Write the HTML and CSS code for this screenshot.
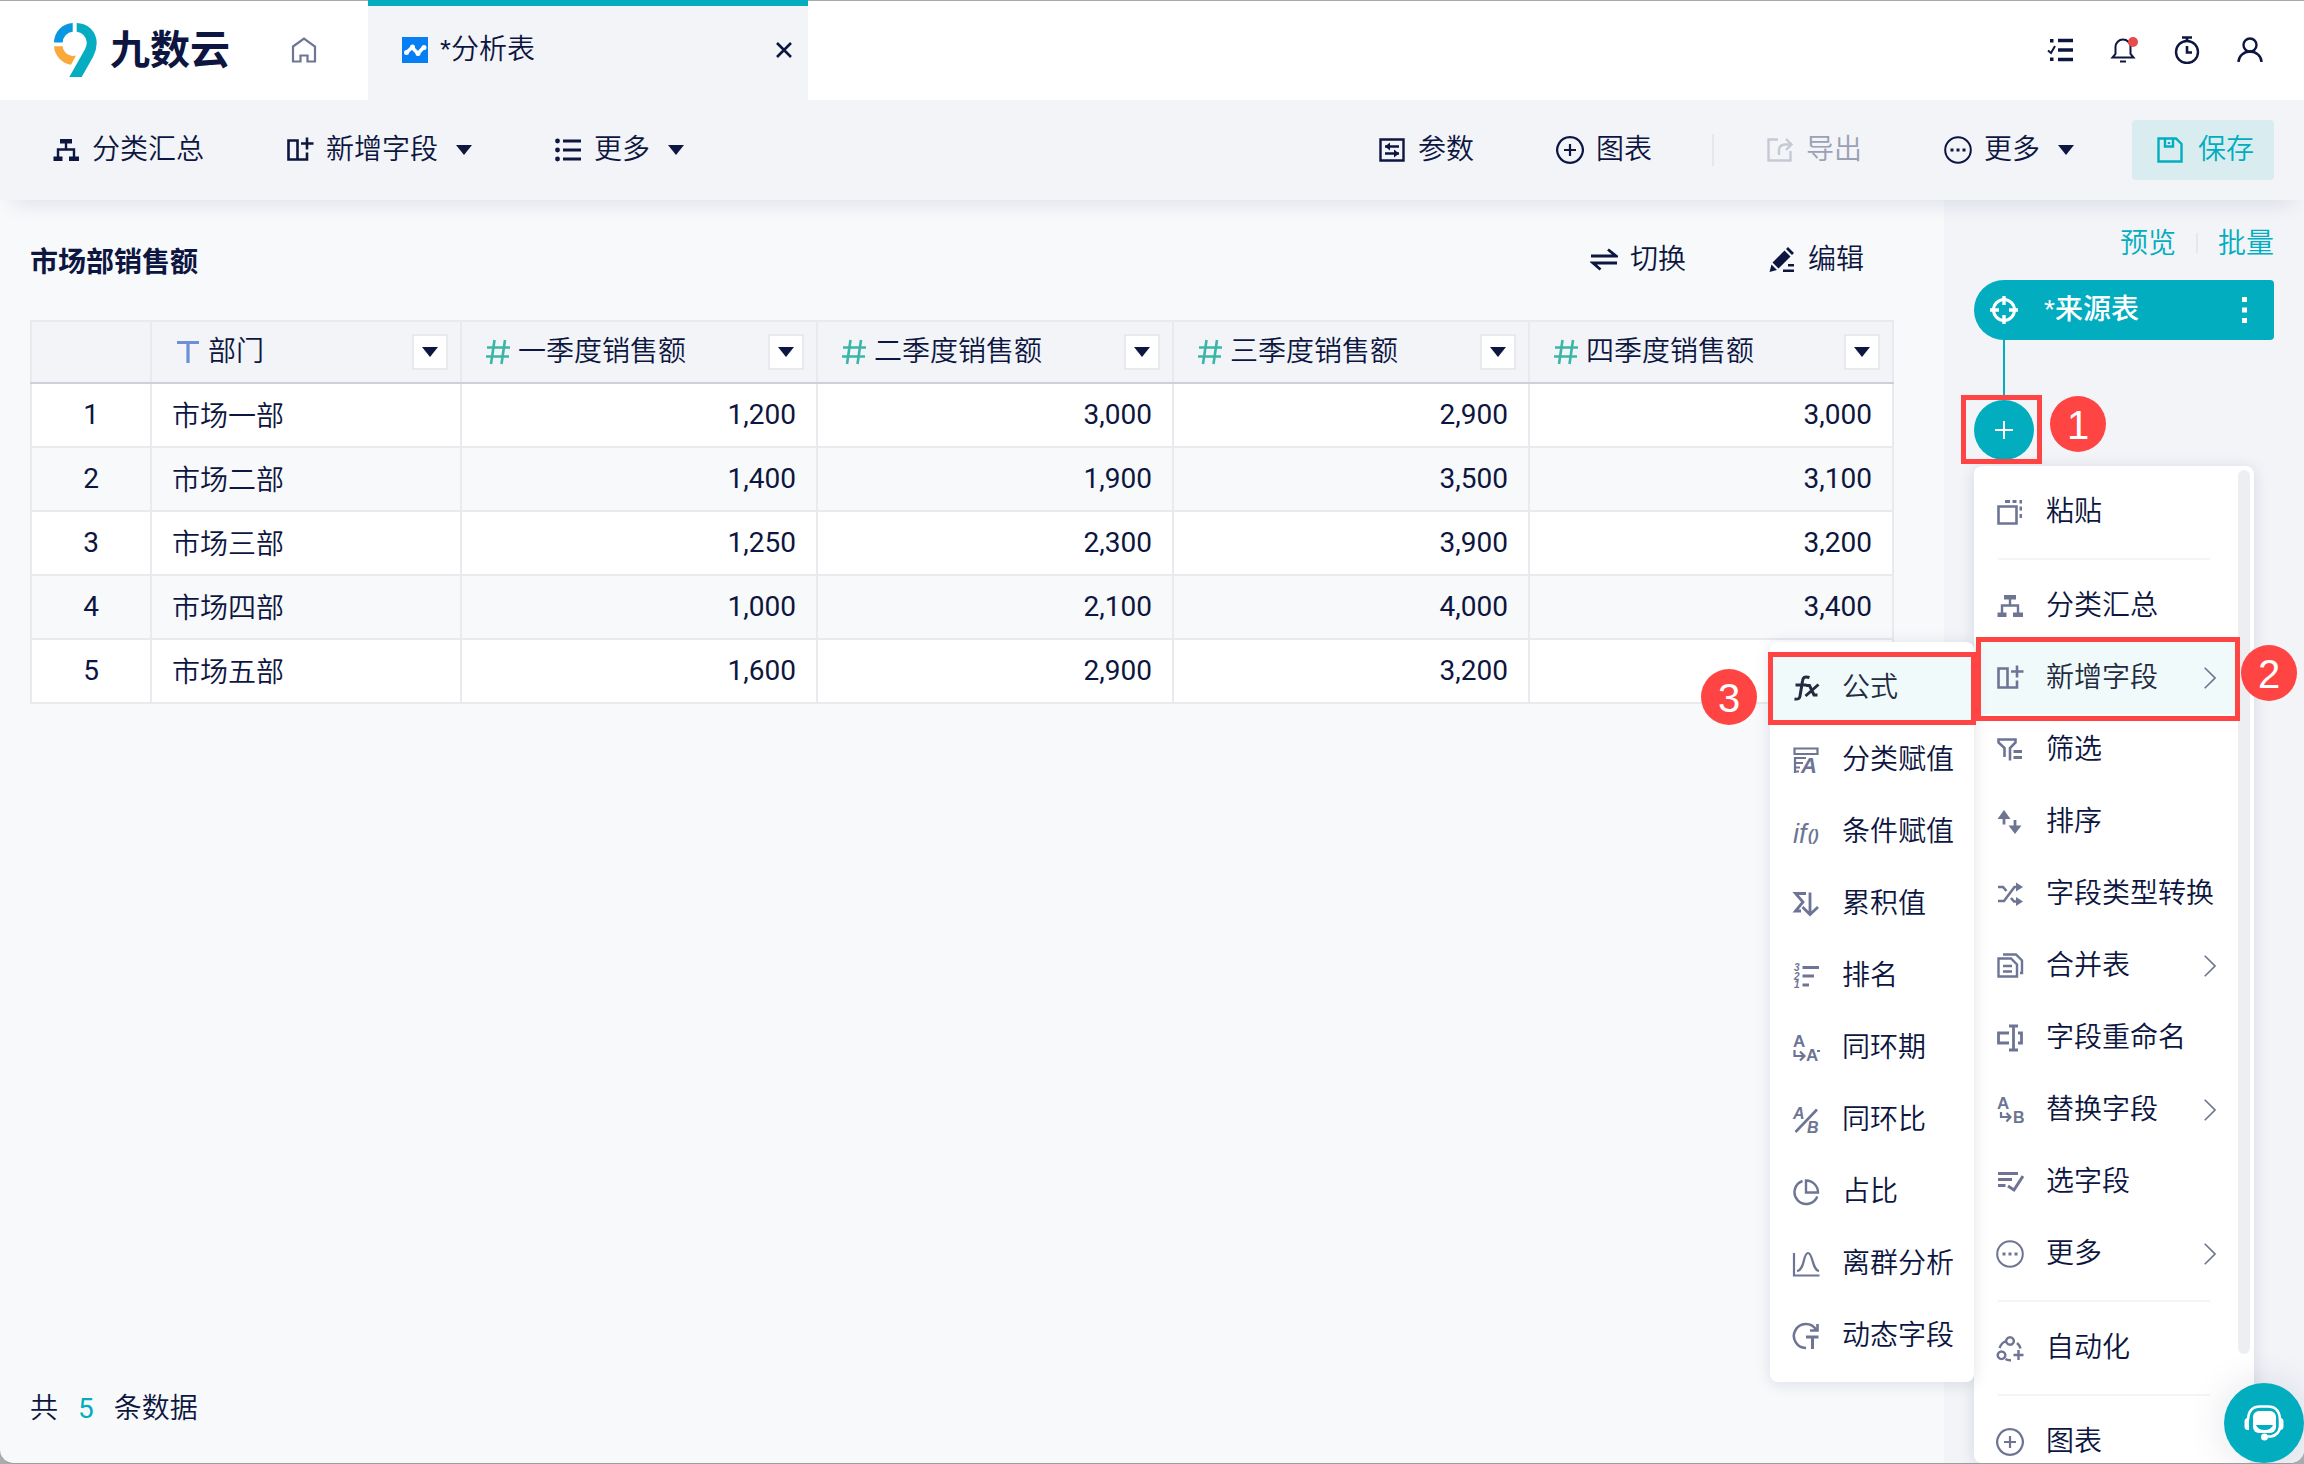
FILE: index.html
```html
<!DOCTYPE html>
<html lang="zh-CN">
<head>
<meta charset="utf-8">
<meta name="viewport" content="width=device-width, initial-scale=1">
<title>九数云 - 分析表</title>
<link rel="stylesheet" href="styles.css">
</head>
<body>
<svg class="sprite" aria-hidden="true">
  <symbol id="i-home" viewBox="0 0 28 28"><path d="M3 10.500 14 2.500l11 8V25.500h-7.500v-6h-7v6H3z" fill="none" stroke="currentColor" stroke-width="2.200"/></symbol>
  <symbol id="i-tree" viewBox="0 0 28 28"><path d="M8 3h12v4.500H8zM1.500 20.500h9V25h-9zM17 20.500h10V25H17z"/><path d="M14 7v6M6 21v-7.500h16V21" fill="none" stroke="currentColor" stroke-width="2.400"/></symbol>
  <symbol id="i-addcol" viewBox="0 0 28 28"><path d="M2.500 4.500h9v19h-9zM11.500 23.500H21V16.500M21 1.500v12M15 7.500h12.500" fill="none" stroke="currentColor" stroke-width="2.600"/></symbol>
  <symbol id="i-list" viewBox="0 0 28 28"><circle cx="3.500" cy="5" r="2.400"/><circle cx="3.500" cy="14" r="2.400"/><circle cx="3.500" cy="23" r="2.400"/><path d="M9 5h18M9 14h18M9 23h18" stroke="currentColor" stroke-width="2.800"/></symbol>
  <symbol id="i-param" viewBox="0 0 28 28"><path d="M2.500 3.500h23v21h-23zM7 10.500h14M7 17.500h14" fill="none" stroke="currentColor" stroke-width="2.400"/><path d="M12 6.500v8l-5-4zM16 13.500v8l5-4z"/></symbol>
  <symbol id="i-plus-circle" viewBox="0 0 28 28"><path d="M14 1.200a12.800 12.800 0 1 0 .01 0zM14 8v12M8 14h12" fill="none" stroke="currentColor" stroke-width="2.200"/></symbol>
  <symbol id="i-export" viewBox="0 0 28 28"><path d="M12 3.500H2.500v21h22V15M13 19v-5q0-5 6-5.500h6M20 3l5.500 5.500L20 14" fill="none" stroke="currentColor" stroke-width="2.400"/></symbol>
  <symbol id="i-more" viewBox="0 0 28 28"><circle cx="14" cy="14" r="12.800" fill="none" stroke="currentColor" stroke-width="2"/><path d="M6.500 12.500h3v3h-3zM12.500 12.500h3v3h-3zM18.500 12.500h3v3h-3z"/></symbol>
  <symbol id="i-save" viewBox="0 0 28 28"><path d="M2.500 2.500H20l5.500 5.500v17.500h-23zM9 3v7.500h8V3M13 6v2" fill="none" stroke="currentColor" stroke-width="2.400"/></symbol>
  <symbol id="i-tasks" viewBox="0 0 28 28"><path d="M11 4.500h15M11 14h15M11 23.500h15" stroke="currentColor" stroke-width="3.400"/><path d="M3 3h3.500v3.500H3zM3 21.500h3.500V25H3z"/><path d="m1 14.500 3 2.500 4-7" fill="none" stroke="currentColor" stroke-width="2"/></symbol>
  <symbol id="i-bell" viewBox="0 0 28 28"><path d="M2.500 21.500h21L20.500 18V11a7.500 7.500 0 0 0-15 0v7zM10 25.500h6" fill="none" stroke="currentColor" stroke-width="2"/><circle cx="23" cy="6" r="5" fill="#e94b4b"/></symbol>
  <symbol id="i-timer" viewBox="0 0 28 28"><circle cx="14" cy="16" r="11" fill="none" stroke="currentColor" stroke-width="2.400"/><path d="M9 1.500h10M14 2v4M14 10v6.500h5" fill="none" stroke="currentColor" stroke-width="2.600"/></symbol>
  <symbol id="i-user" viewBox="0 0 28 28"><circle cx="14" cy="9" r="6.500" fill="none" stroke="currentColor" stroke-width="2.400"/><path d="M2.500 26a11.500 10.500 0 0 1 23 0" fill="none" stroke="currentColor" stroke-width="2.400"/></symbol>
  <symbol id="i-swap" viewBox="0 0 28 28"><path d="M1 10h25L18 3.500M27 17H3l7.500 6.500" fill="none" stroke="currentColor" stroke-width="2.800"/></symbol>
  <symbol id="i-edit" viewBox="0 0 28 28"><path d="m4.500 16.500 12-12 6 6-12 12zM18 3l2-2 6 6-2 2zM1.500 26l2-7.500 5.500 5.500zM20 18h6v2.500h-6zM15 23.500h11V26H15z"/></symbol>
  <symbol id="i-type-text" viewBox="0 0 28 28"><path d="M3 4.500h22M14 4.500V25" fill="none" stroke="currentColor" stroke-width="3.200"/></symbol>
  <symbol id="i-type-num" viewBox="0 0 28 28"><path d="M10.500 2 7 26M21 2l-3.500 24M3 9.500h23M2 18.500h23" fill="none" stroke="currentColor" stroke-width="2.600"/></symbol>
  <symbol id="i-target" viewBox="0 0 28 28"><circle cx="14" cy="14" r="10.500" fill="none" stroke="currentColor" stroke-width="3"/><path d="M14 0v9M14 19v9M0 14h9M19 14h9" stroke="currentColor" stroke-width="3.400"/></symbol>
  <symbol id="i-paste" viewBox="0 0 28 28"><path d="M2.500 8.500h18v17h-18z" fill="none" stroke="currentColor" stroke-width="2.600"/><path d="M9 2h5v3H9zM16.500 2h4v3h-4zM23.500 2H26v3.500h-2.500zM23.500 8.500H26v4h-2.500zM23.500 16H26v4h-2.500z"/></symbol>
  <symbol id="i-filter" viewBox="0 0 28 28"><path d="M8.500 21v-9L2.500 6.500V3.500h17v3L14 12v12.500" fill="none" stroke="currentColor" stroke-width="2.600"/><path d="M17.500 15.500H26M17.500 21.500H26" stroke="currentColor" stroke-width="2.800"/></symbol>
  <symbol id="i-sort" viewBox="0 0 28 28"><path d="m8 2 6.500 9h-13zM19 26l6.500-8.500h-13z"/><path d="M8 10v6.500M19 12v6.500" stroke="currentColor" stroke-width="2.800"/></symbol>
  <symbol id="i-shuffle" viewBox="0 0 28 28"><path d="M2 7h5l3.500 4M2 21h6L18.500 7H24M15 18l3 3.500h6" fill="none" stroke="currentColor" stroke-width="2.600"/><path d="m20 2.500 7 4.500-7 4.500zM20 17l7 4.500-7 4.500z"/></symbol>
  <symbol id="i-merge" viewBox="0 0 28 28"><path d="M2.500 6.500h12.500l6 6v12h-18.500zM7 2.500h13l6 6v12.500h-2M7 14h9M7 19.500h9" fill="none" stroke="currentColor" stroke-width="2.400"/></symbol>
  <symbol id="i-rename" viewBox="0 0 28 28"><path d="M13 9H2.500v10H13M22 9h3.500v10H22M13 2h9M13 26h9M17.500 2v24" fill="none" stroke="currentColor" stroke-width="2.800"/></symbol>
  <symbol id="i-replace" viewBox="0 0 28 28"><text x="1" y="13" font-size="17" font-weight="700">A</text><text x="17" y="27" font-size="16" font-weight="700">B</text><path d="M5 16v5h9M10.500 17l4 4-4 4.500" fill="none" stroke="currentColor" stroke-width="2.200"/></symbol>
  <symbol id="i-select" viewBox="0 0 28 28"><path d="M2 5.500h20M2 11.500h14M2 17.500h7.500M12 18l6 4 9-14" fill="none" stroke="currentColor" stroke-width="3"/></symbol>
  <symbol id="i-auto" viewBox="0 0 28 28"><path d="M14 3.200a3.800 3.800 0 1 0 .01 0zM5.500 17.500a3.800 3.800 0 1 0 .01 0zM3.500 14a12 12 0 0 1 6.500-7M21 9q3 2.500 3.500 5.500M9.500 25q2 1.500 5.500 1.200M22.500 16v10M17.500 21h10" fill="none" stroke="currentColor" stroke-width="2.400"/></symbol>
  <symbol id="i-fx" viewBox="0 0 28 28"><path d="M17.500 3.500c-5-1.500-6.500 0-7 3.500L8 22c-.5 3-2 3.500-5.500 3M3.500 11h11M14 11.500h3.500l4.500 9.500h3.500M26.500 10.500 13.500 22" fill="none" stroke="currentColor" stroke-width="3"/></symbol>
  <symbol id="i-assign" viewBox="0 0 28 28"><path d="M2.500 2.500h23v5.500h-23zM2 12h12M2 17h9M2 21.500h6M3 11v16M2 25.500h5" fill="none" stroke="currentColor" stroke-width="2.200"/><text x="9" y="27" font-size="22" font-style="italic" font-weight="700">A</text></symbol>
  <symbol id="i-if" viewBox="0 0 28 28"><text x="1" y="25" font-size="27" font-style="italic" font-weight="400">if</text><text x="16" y="23" font-size="16" font-style="italic" font-weight="700">()</text></symbol>
  <symbol id="i-sum" viewBox="0 0 28 28"><path d="M14 3.500H3.500L11 12 3.500 21H9M18 2.500v22M10.500 17l7.500 7.500 8-7.500" fill="none" stroke="currentColor" stroke-width="2.800"/></symbol>
  <symbol id="i-rank" viewBox="0 0 28 28"><text x="2" y="9" font-size="10" font-style="italic" font-weight="700">3</text><text x="2" y="17.500" font-size="10" font-style="italic" font-weight="700">2</text><text x="2" y="26" font-size="10" font-style="italic" font-weight="700">1</text><path d="M10.500 5.500H27M10.500 14H22M10.500 23H17" stroke="currentColor" stroke-width="2.800"/></symbol>
  <symbol id="i-period" viewBox="0 0 28 28"><text x="1" y="13" font-size="17" font-weight="700">A</text><text x="14" y="27" font-size="17" font-weight="700">A</text><path d="M2.500 16v6h9M8 17.500l4.500 4.500L8 26.500M25 17h4" fill="none" stroke="currentColor" stroke-width="2.200"/></symbol>
  <symbol id="i-ratio" viewBox="0 0 28 28"><text x="1" y="13" font-size="16" font-style="italic" font-weight="700">A</text><text x="15" y="26.500" font-size="16" font-style="italic" font-weight="700">B</text><path d="M3.500 26 25 3.500" stroke="currentColor" stroke-width="2.600"/></symbol>
  <symbol id="i-pie" viewBox="0 0 28 28"><path d="M10.500 3A11.800 11.800 0 1 0 25.300 18.500M14 2.500v12h12A12 12 0 0 0 14 2.500z" fill="none" stroke="currentColor" stroke-width="2.400"/></symbol>
  <symbol id="i-curve" viewBox="0 0 28 28"><path d="M2 3v22.500h25.500M5 21c8-1 6-18 11-18s4 17 11 18" fill="none" stroke="currentColor" stroke-width="2.200"/></symbol>
  <symbol id="i-dynamic" viewBox="0 0 28 28"><path d="M14 26A12 12 0 1 1 24 7.500M25.500 2v6.500H18" fill="none" stroke="currentColor" stroke-width="2.600"/><path d="M14 15h12.500M20.500 15v12" stroke="currentColor" stroke-width="3"/></symbol>
  <symbol id="i-caret" viewBox="0 0 16 10"><path d="M0 0h16L8 10z"/></symbol>
  <symbol id="i-chevron" viewBox="0 0 12 22"><path d="M.7.7 11 11 .7 21.300" fill="none" stroke="currentColor" stroke-width="1.600"/></symbol>
</svg>

<div class="window">
  <header class="topbar">
    <a class="logo" href="#">
      <svg class="logo-mark" viewBox="0 0 46 58" aria-hidden="true">
        <path fill="#0a97e2" d="M2 21.500A19.500 19.500 0 0 1 20.700 2v8.700A11 11 0 0 0 10.700 21.500z"/>
        <path fill="#fba93b" d="M2 25.300h8.700A10.500 10.500 0 0 0 24 34.500l-5 9.200A20 20 0 0 1 2 25.300z"/>
        <path fill="#06adc0" d="M24.700 2A20 20 0 0 1 44.700 22Q44.700 29 41 36L29.700 56H17.300L32 30Q35 25 34.700 21A11.500 11.500 0 0 0 24.700 10.700z"/>
      </svg>
      <span class="logo-name">九数云</span>
    </a>
    <a class="home" href="#" aria-label="首页"><svg class="icon"><use href="#i-home"/></svg></a>
    <div class="tab">
      <svg class="tab-icon" viewBox="0 0 26 26" aria-hidden="true"><path fill="#067ff5" d="M0 0h26v26H0z"/><path d="m4 16 6-5.500 6 6L22 10" fill="none" stroke="#fff" stroke-width="3.500"/><g fill="#fff"><circle cx="4.500" cy="15.500" r="2.500"/><circle cx="10.500" cy="10" r="2.500"/><circle cx="16" cy="16.500" r="2.500"/><circle cx="22" cy="10.500" r="2.500"/></g></svg>
      <span class="tab-title">*分析表</span>
      <button class="tab-close" type="button" aria-label="关闭"><svg viewBox="0 0 16 16"><path d="m1 1 14 14M15 1 1 15" stroke="currentColor" stroke-width="2.600"/></svg></button>
    </div>
    <nav class="account">
      <a href="#" aria-label="任务"><svg class="icon"><use href="#i-tasks"/></svg></a>
      <a href="#" aria-label="通知"><svg class="icon"><use href="#i-bell"/></svg></a>
      <a href="#" aria-label="定时"><svg class="icon"><use href="#i-timer"/></svg></a>
      <a href="#" aria-label="用户"><svg class="icon"><use href="#i-user"/></svg></a>
    </nav>
  </header>

  <div class="toolbar">
    <div class="tools">
      <button class="tool" type="button"><svg class="icon"><use href="#i-tree"/></svg>分类汇总</button>
      <button class="tool" type="button"><svg class="icon"><use href="#i-addcol"/></svg>新增字段<svg class="caret"><use href="#i-caret"/></svg></button>
      <button class="tool" type="button"><svg class="icon"><use href="#i-list"/></svg>更多<svg class="caret"><use href="#i-caret"/></svg></button>
    </div>
    <div class="tools tools-end">
      <button class="tool" type="button"><svg class="icon"><use href="#i-param"/></svg>参数</button>
      <button class="tool" type="button"><svg class="icon"><use href="#i-plus-circle"/></svg>图表</button>
    </div>
    <span class="tool-divider"></span>
    <div class="tools">
      <button class="tool" type="button" disabled><svg class="icon"><use href="#i-export"/></svg>导出</button>
      <button class="tool" type="button"><svg class="icon"><use href="#i-more"/></svg>更多<svg class="caret"><use href="#i-caret"/></svg></button>
    </div>
    <button class="save" type="button"><svg class="icon"><use href="#i-save"/></svg>保存</button>
  </div>

  <div class="workspace">
    <main class="content">
      <div class="heading">
        <h1>市场部销售额</h1>
        <button class="tool" type="button"><svg class="icon"><use href="#i-swap"/></svg>切换</button>
        <button class="tool" type="button"><svg class="icon"><use href="#i-edit"/></svg>编辑</button>
      </div>
      <table class="data">
        <colgroup><col class="c-index"><col class="c-dept"><col class="c-num"><col class="c-num"><col class="c-num"><col></colgroup>
        <thead>
          <tr>
            <th></th>
            <th scope="col"><div class="field"><svg class="icon text"><use href="#i-type-text"/></svg>部门<button type="button" aria-label="部门"><svg class="caret"><use href="#i-caret"/></svg></button></div></th>
            <th scope="col"><div class="field"><svg class="icon num"><use href="#i-type-num"/></svg>一季度销售额<button type="button" aria-label="一季度"><svg class="caret"><use href="#i-caret"/></svg></button></div></th>
            <th scope="col"><div class="field"><svg class="icon num"><use href="#i-type-num"/></svg>二季度销售额<button type="button" aria-label="二季度"><svg class="caret"><use href="#i-caret"/></svg></button></div></th>
            <th scope="col"><div class="field"><svg class="icon num"><use href="#i-type-num"/></svg>三季度销售额<button type="button" aria-label="三季度"><svg class="caret"><use href="#i-caret"/></svg></button></div></th>
            <th scope="col"><div class="field"><svg class="icon num"><use href="#i-type-num"/></svg>四季度销售额<button type="button" aria-label="四季度"><svg class="caret"><use href="#i-caret"/></svg></button></div></th>
          </tr>
        </thead>
        <tbody>
          <tr><td>1</td><td>市场一部</td><td>1,200</td><td>3,000</td><td>2,900</td><td>3,000</td></tr>
          <tr><td>2</td><td>市场二部</td><td>1,400</td><td>1,900</td><td>3,500</td><td>3,100</td></tr>
          <tr><td>3</td><td>市场三部</td><td>1,250</td><td>2,300</td><td>3,900</td><td>3,200</td></tr>
          <tr><td>4</td><td>市场四部</td><td>1,000</td><td>2,100</td><td>4,000</td><td>3,400</td></tr>
          <tr><td>5</td><td>市场五部</td><td>1,600</td><td>2,900</td><td>3,200</td><td></td></tr>
        </tbody>
      </table>
      <footer class="count"><span>共</span><span class="total">5</span><span>条数据</span></footer>
    </main>

    <aside class="steps">
      <nav class="step-links"><a href="#">预览</a><a href="#">批量</a></nav>
      <div class="node">
        <svg class="icon"><use href="#i-target"/></svg>
        <span class="node-name">*来源表</span>
        <button type="button" aria-label="操作"><svg viewBox="0 0 6 26"><path d="M0 0h5v5H0zM0 10.500h5v5H0zM0 21h5v5H0z"/></svg></button>
      </div>
      <span class="link-line"></span>
      <button class="add" type="button" aria-label="添加步骤"><svg viewBox="0 0 20 20"><path d="M10 1v18M1 10h18" stroke="currentColor" stroke-width="2"/></svg></button>

      <div class="menu step-menu">
        <button class="item" type="button"><svg class="icon"><use href="#i-paste"/></svg>粘贴</button>
        <hr>
        <button class="item" type="button"><svg class="icon"><use href="#i-tree"/></svg>分类汇总</button>
        <button class="item active" type="button"><svg class="icon"><use href="#i-addcol"/></svg>新增字段<svg class="chevron"><use href="#i-chevron"/></svg></button>
        <button class="item" type="button"><svg class="icon"><use href="#i-filter"/></svg>筛选</button>
        <button class="item" type="button"><svg class="icon"><use href="#i-sort"/></svg>排序</button>
        <button class="item" type="button"><svg class="icon"><use href="#i-shuffle"/></svg>字段类型转换</button>
        <button class="item" type="button"><svg class="icon"><use href="#i-merge"/></svg>合并表<svg class="chevron"><use href="#i-chevron"/></svg></button>
        <button class="item" type="button"><svg class="icon"><use href="#i-rename"/></svg>字段重命名</button>
        <button class="item" type="button"><svg class="icon"><use href="#i-replace"/></svg>替换字段<svg class="chevron"><use href="#i-chevron"/></svg></button>
        <button class="item" type="button"><svg class="icon"><use href="#i-select"/></svg>选字段</button>
        <button class="item" type="button"><svg class="icon"><use href="#i-more"/></svg>更多<svg class="chevron"><use href="#i-chevron"/></svg></button>
        <hr>
        <button class="item" type="button"><svg class="icon"><use href="#i-auto"/></svg>自动化</button>
        <hr>
        <button class="item" type="button"><svg class="icon"><use href="#i-plus-circle"/></svg>图表</button>
        <span class="thumb"></span>
      </div>

      <div class="menu field-menu">
        <button class="item active dark" type="button"><svg class="icon"><use href="#i-fx"/></svg>公式</button>
        <button class="item" type="button"><svg class="icon"><use href="#i-assign"/></svg>分类赋值</button>
        <button class="item" type="button"><svg class="icon"><use href="#i-if"/></svg>条件赋值</button>
        <button class="item" type="button"><svg class="icon"><use href="#i-sum"/></svg>累积值</button>
        <button class="item" type="button"><svg class="icon"><use href="#i-rank"/></svg>排名</button>
        <button class="item" type="button"><svg class="icon"><use href="#i-period"/></svg>同环期</button>
        <button class="item" type="button"><svg class="icon"><use href="#i-ratio"/></svg>同环比</button>
        <button class="item" type="button"><svg class="icon"><use href="#i-pie"/></svg>占比</button>
        <button class="item" type="button"><svg class="icon"><use href="#i-curve"/></svg>离群分析</button>
        <button class="item" type="button"><svg class="icon"><use href="#i-dynamic"/></svg>动态字段</button>
      </div>

      <span class="frame frame-1"></span><span class="badge badge-1">1</span>
      <span class="frame frame-2"></span><span class="badge badge-2">2</span>
      <span class="frame frame-3"></span><span class="badge badge-3">3</span>

      <button class="chat" type="button" aria-label="客服">
        <svg viewBox="0 0 40 36"><rect x="9" y="6" width="23" height="22" rx="6" fill="#fff"/><path d="M12 20h17q-2 5-8.500 5T12 20z" fill="#02adc0"/><path d="M4 15v-1Q5 1.500 16 1.500h8Q35 1.500 36 14v8q-1 8-9 9.500h-6" fill="none" stroke="#fff" stroke-width="2.600"/><path d="M5 13v12H4a3.500 3.500 0 0 1-3.500-3.500v-5A3.500 3.500 0 0 1 4 13zM35 13v12h1a3.500 3.500 0 0 0 3.500-3.500v-5A3.500 3.500 0 0 0 36 13z" fill="#fff"/><circle cx="20.500" cy="32" r="3.500" fill="#fff"/></svg>
      </button>
    </aside>
  </div>
</div>
</body>
</html>
```
FILE: styles.css
```css
* {
  box-sizing: border-box;
}

:root {
  --ink: #0d1640;
  --muted: #6e7594;
  --teal: #02adc0;
  --panel: #f2f4f8;
  --page: #f7f9fb;
  --line: #e8eaee;
  --red: #ff4444;
}

html {
  background: #a9abae;
}

body {
  margin: 0;
  color: var(--ink);
  font: 350 28px/40px "Liberation Sans", "Noto Sans CJK SC", sans-serif;
}

button {
  margin: 0;
  padding: 0;
  border: 0;
  background: none;
  color: inherit;
  font: inherit;
  cursor: pointer;
}

a {
  color: inherit;
  text-decoration: none;
}

svg {
  display: block;
  flex: none;
  fill: currentColor;
}

.sprite {
  display: none;
}

.icon {
  width: 28px;
  height: 28px;
  overflow: visible;
}

.caret {
  width: 16px;
  height: 10px;
}

.window {
  display: flex;
  flex-direction: column;
  min-height: 100vh;
  border-bottom: 1px solid #9a9ca0;
  border-radius: 0 0 14px 14px;
  background: var(--page);
  overflow: hidden;
}

/* Top bar */
.topbar {
  display: flex;
  align-items: center;
  height: 100px;
  padding-right: 40px;
  background: #fff;
  box-shadow: inset 0 1px #a5a8ad;
}

.logo {
  display: flex;
  align-items: center;
  gap: 12px;
  width: 238px;
  margin-left: 52px;
}

.logo-mark {
  width: 46px;
  height: 58px;
}

.logo-name {
  font-size: 40px;
  font-weight: 700;
}

.home {
  color: var(--muted);
}

.tab {
  display: flex;
  align-items: center;
  align-self: stretch;
  width: 440px;
  margin-left: 50px;
  padding: 0 16px 6px 34px;
  border-top: 6px solid var(--teal);
  background: var(--panel);
}

.tab-icon {
  width: 26px;
  height: 26px;
  margin-right: 12px;
}

.tab-close {
  margin-left: auto;
}

.tab-close svg {
  width: 16px;
  height: 16px;
}

.account {
  display: flex;
  gap: 35px;
  margin-left: auto;
}

/* Toolbar */
.toolbar {
  position: relative;
  z-index: 1;
  display: flex;
  align-items: center;
  height: 100px;
  padding: 0 30px 0 52px;
  background: var(--panel);
  box-shadow: 0 16px 20px -12px rgba(13, 22, 64, 0.1);
}

.tools {
  display: flex;
  gap: 82px;
}

.tools-end {
  margin-left: auto;
}

.tool {
  display: flex;
  align-items: center;
  gap: 12px;
  white-space: nowrap;
}

.tool .caret {
  margin-left: 6px;
}

.tool:disabled {
  color: #9ba0b5;
}

.tool:disabled .icon {
  color: #c6c9d3;
}

.tool-divider {
  width: 2px;
  height: 32px;
  margin: 0 52px 0 60px;
  background: #e5e7ec;
}

.save {
  display: flex;
  align-items: center;
  gap: 14px;
  height: 60px;
  margin-left: 58px;
  padding: 0 20px 0 24px;
  border-radius: 4px;
  background: #d9ecf0;
  color: var(--teal);
}

/* Data table */
.workspace {
  display: flex;
  flex: 1;
}

.content {
  display: flex;
  flex: 1;
  flex-direction: column;
  padding: 0 50px 34px 30px;
}

.heading {
  display: flex;
  align-items: center;
  gap: 82px;
  height: 120px;
  padding-right: 30px;
}

h1 {
  margin: 0 auto 0 0;
  padding-top: 6px;
  font-size: 28px;
  font-weight: 700;
}

.data {
  width: 100%;
  border: 2px solid var(--line);
  border-collapse: collapse;
  table-layout: fixed;
}

.c-index {
  width: 120px;
}

.c-dept {
  width: 310px;
}

.c-num {
  width: 356px;
}

.data th,
.data td {
  height: 64px;
  padding: 0 20px;
  border: 2px solid var(--line);
  text-align: right;
}

.data td {
  font-family: Roboto, "Noto Sans CJK SC", sans-serif;
  font-weight: 400;
}

.data th {
  height: 62px;
  padding: 0 12px 0 22px;
  border-bottom-color: #cdd0d9;
  background: var(--panel);
  font-weight: inherit;
}

.data tbody tr {
  background: #fff;
}

.data tbody tr:nth-child(even) {
  background: var(--page);
}

.data td:first-child {
  text-align: center;
}

.data td:nth-child(2) {
  padding-top: 4px;
  font-weight: inherit;
  text-align: left;
}

.field {
  display: flex;
  align-items: center;
  gap: 6px;
}

.field .text {
  color: #6b8fd8;
}

.field .num {
  color: #3ab5a6;
}

.field button {
  display: grid;
  place-items: center;
  width: 36px;
  height: 36px;
  margin-left: auto;
  border: 2px solid var(--line);
  background: #fff;
}

.count {
  display: flex;
  gap: 20px;
  margin-top: auto;
}

.total {
  color: var(--teal);
  font-family: Roboto, sans-serif;
  font-weight: 400;
}

/* Step panel */
.steps {
  position: relative;
  width: 360px;
  padding: 22px 30px 0;
  background: var(--panel);
}

.step-links {
  display: flex;
  justify-content: flex-end;
  align-items: center;
  height: 44px;
  margin-bottom: 14px;
  color: var(--teal);
}

.step-links a + a::before {
  content: "";
  display: inline-block;
  width: 2px;
  height: 20px;
  margin: 0 20px;
  background: #e5e7ec;
}

.node {
  display: flex;
  align-items: center;
  height: 60px;
  padding: 0 26px 0 16px;
  border-radius: 30px 4px 4px 30px;
  background: var(--teal);
  color: #fff;
  font-weight: 500;
}

.node-name {
  margin: 0 auto 0 26px;
}

.node button svg {
  width: 6px;
  height: 26px;
}

.link-line {
  display: block;
  width: 2px;
  height: 60px;
  margin-left: 29px;
  background: var(--teal);
}

.add {
  display: grid;
  place-items: center;
  width: 60px;
  height: 60px;
  border-radius: 50%;
  background: var(--teal);
  color: #fff;
}

.add svg {
  width: 20px;
  height: 20px;
}

/* Menus */
.menu {
  position: absolute;
  padding: 10px 0;
  border-radius: 8px;
  background: #fff;
  box-shadow: 0 2px 16px rgba(13, 22, 64, 0.12);
}

.step-menu {
  top: 266px;
  bottom: 0;
  left: 30px;
  width: 280px;
  padding-right: 16px;
  overflow: hidden;
}

.field-menu {
  top: 442px;
  right: 330px;
  width: 204px;
}

.item {
  display: flex;
  align-items: center;
  gap: 22px;
  width: 100%;
  height: 72px;
  padding: 0 22px;
  white-space: nowrap;
}

.item .icon {
  color: var(--muted);
}

.item.active {
  background: #f1fafb;
  color: #222b40;
}

.item.dark .icon {
  color: #222b40;
}

.field-menu .item {
  padding-right: 0;
}

.chevron {
  width: 12px;
  height: 22px;
  margin-left: auto;
  color: var(--muted);
}

.menu hr {
  height: 2px;
  margin: 10px 28px 10px 24px;
  border: 0;
  background: var(--panel);
}

.thumb {
  position: absolute;
  top: 4px;
  right: 4px;
  width: 12px;
  height: 884px;
  border-radius: 6px;
  background: #edeef1;
}

/* Numbered guide marks laid over the panel */
.frame {
  position: absolute;
  border: 5px solid var(--red);
  pointer-events: none;
}

.frame-1 {
  top: 195px;
  left: 17px;
  width: 81px;
  height: 69px;
}

.frame-2 {
  top: 437px;
  left: 32px;
  width: 264px;
  height: 84px;
}

.frame-3 {
  top: 452px;
  right: 328px;
  width: 208px;
  height: 73px;
}

.badge {
  position: absolute;
  width: 56px;
  height: 56px;
  border-radius: 50%;
  background: var(--red);
  color: #fff;
  font-size: 40px;
  font-weight: 400;
  line-height: 58px;
  text-align: center;
}

.badge-1 {
  top: 196px;
  left: 106px;
}

.badge-2 {
  top: 445px;
  left: 297px;
}

.badge-3 {
  top: 469px;
  right: 547px;
}

.chat {
  position: absolute;
  right: 0;
  bottom: 0;
  display: grid;
  place-items: center;
  width: 80px;
  height: 80px;
  border-radius: 50%;
  background: var(--teal);
  box-shadow: 0 0 40px rgba(13, 22, 64, 0.12);
}

.chat svg {
  width: 40px;
  height: 36px;
}
```
